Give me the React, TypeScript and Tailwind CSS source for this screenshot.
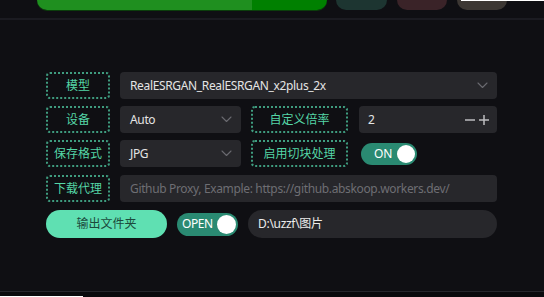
import React from "react";

const font = { fontFamily: '"Noto Sans", "Noto Sans CJK SC", sans-serif' };

function Chevron() {
  return (
    <svg width="11" height="7" viewBox="0 0 11 7" fill="none" className="shrink-0">
      <path d="M1 1 L5.5 5.5 L10 1" stroke="#6a6a70" strokeWidth="1.1" strokeLinecap="round" strokeLinejoin="round" />
    </svg>
  );
}

function Label({ children, w }: { children: React.ReactNode; w: string }) {
  return (
    <div
      className={`${w} h-[27px] shrink-0 flex items-center justify-center rounded-[4px] border-2 border-dotted border-[#3f9c7f] text-[12px] text-[#55d6a6] whitespace-nowrap`}
    >
      {children}
    </div>
  );
}

function Select({ value, w }: { value: string; w: string }) {
  return (
    <div className={`${w} h-[27px] shrink-0 flex items-center justify-between pl-[10px] pr-[9px] rounded-[4px] bg-[#27272b] text-[12px] tracking-[-0.35px] text-[#e4e4e4] whitespace-nowrap`}>
      <span>{value}</span>
      <Chevron />
    </div>
  );
}

export default function App() {
  return (
    <div className="w-[544px] h-[297px] bg-[#0f0f13] overflow-hidden flex flex-col" style={font}>
      {/* top bar */}
      <div className="h-[18px] flex items-end pl-[37px] overflow-hidden shrink-0">
        <div className="h-[10px] flex items-end self-start">
          <div className="w-[290px] h-[10px] rounded-b-[10px] overflow-hidden flex shadow-[0_1px_0_#0b3d0b]">
            <div className="w-[215px] bg-[#1f8f1f]" />
            <div className="flex-1 bg-[#008000]" />
          </div>
          <div className="ml-[9px] w-[51px] h-[10px] rounded-b-[10px] bg-[#1d3531] overflow-hidden flex justify-center">
            <span className="text-[12px] leading-[12px] -mt-[11px] text-[#5ad6a8]">开始</span>
          </div>
          <div className="ml-[10px] w-[50px] h-[10px] rounded-b-[10px] bg-[#3a2328] overflow-hidden flex justify-center">
            <span className="text-[12px] leading-[12px] -mt-[11px] text-[#e07a86]">停止</span>
          </div>
          <div className="ml-[10px] w-[50px] h-[10px] rounded-b-[10px] bg-[#3c3733] overflow-hidden flex justify-center relative">
            <span className="text-[12px] leading-[12px] -mt-[11px] text-[#e0cfa6]">日志</span>
          </div>
        </div>
      </div>
      <div className="relative h-0">
        <div className="absolute left-[461px] -top-[18px] w-[83px] h-[1px] bg-white" />
      </div>
      <div className="h-[2px] bg-[#1b1b21] shrink-0" />

      {/* form */}
      <div className="flex-1 flex flex-col gap-[7px] pl-[46px] pr-[47px] pt-[52px]">
        <div className="flex gap-[10px]">
          <Label w="w-[64px]">模型</Label>
          <Select value="RealESRGAN_RealESRGAN_x2plus_2x" w="flex-1" />
        </div>
        <div className="flex gap-[10px]">
          <Label w="w-[64px]">设备</Label>
          <Select value="Auto" w="w-[121px]" />
          <Label w="w-[97px]">自定义倍率</Label>
          <div className="ml-[1px] flex-1 h-[27px] flex items-center justify-between pl-[9px] pr-[8px] rounded-[4px] bg-[#27272b] text-[12px] text-[#e4e4e4]">
            <span>2</span>
            <div className="flex items-center gap-[4px] text-[#bdbdc0]">
              <svg width="10" height="10" viewBox="0 0 10 10"><path d="M0 5 H10" stroke="currentColor" strokeWidth="1.5" /></svg>
              <svg width="10" height="10" viewBox="0 0 10 10"><path d="M0 5 H10 M5 0 V10" stroke="currentColor" strokeWidth="1.5" /></svg>
            </div>
          </div>
        </div>
        <div className="flex gap-[10px]">
          <Label w="w-[64px]">保存格式</Label>
          <Select value="JPG" w="w-[121px]" />
          <Label w="w-[97px]">启用切块处理</Label>
          <div className="ml-[3px] flex items-center">
            <div className="w-[56px] h-[22px] rounded-full bg-[#2a8a72] flex items-center justify-between pl-[13px] pr-[2px]">
              <span className="text-[12px] text-white">ON</span>
              <div className="w-[18px] h-[18px] rounded-full bg-white" />
            </div>
          </div>
        </div>
        <div className="flex gap-[10px] mt-[1px]">
          <Label w="w-[64px]">下载代理</Label>
          <div className="flex-1 h-[27px] flex items-center pl-[10px] rounded-[4px] bg-[#27272b] text-[12px] tracking-[-0.35px] text-[#6e6e73] whitespace-nowrap overflow-hidden">
            Github Proxy, Example: https://github.abskoop.workers.dev/
          </div>
        </div>
        <div className="flex items-center gap-[10px] mt-[1px]">
          <div className="w-[121px] h-[28px] rounded-full bg-[#5fe0b2] flex items-center justify-center text-[12px] text-[#1c4a3c]">
            输出文件夹
          </div>
          <div className="w-[61px] h-[23px] rounded-full bg-[#2a8a72] flex items-center justify-between pl-[5px] pr-[2px]">
            <span className="text-[12px] tracking-[-0.4px] text-white">OPEN</span>
            <div className="w-[19px] h-[19px] rounded-full bg-white" />
          </div>
          <div className="flex-1 h-[28px] rounded-full bg-[#27272b] flex items-center pl-[10px] text-[12px] tracking-[-0.3px] text-[#ececec]">
            D:\uzzf\图片
          </div>
        </div>
      </div>

      <div className="h-[1px] bg-[#26262c] shrink-0" />
      <div className="h-[5px] bg-[#0a0a0d] shrink-0 flex items-end">
        <div className="w-[83px] h-[1px] bg-white" />
      </div>
    </div>
  );
}
